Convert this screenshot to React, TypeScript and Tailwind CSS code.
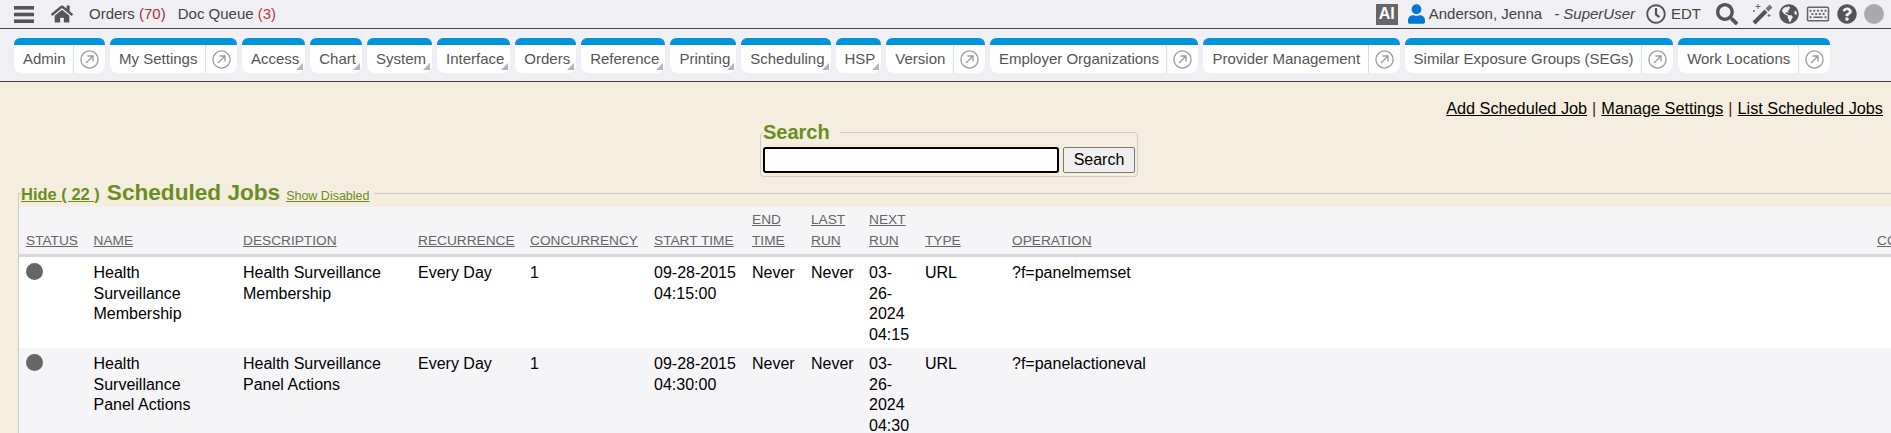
import { FaHome, FaUser, FaRegClock, FaSearch, FaGlobeAmericas, FaRegKeyboard, FaQuestionCircle } from 'react-icons/fa';

const tabs = [
  { label: 'Admin', type: 'link' },
  { label: 'My Settings', type: 'link' },
  { label: 'Access', type: 'menu' },
  { label: 'Chart', type: 'menu' },
  { label: 'System', type: 'menu' },
  { label: 'Interface', type: 'menu' },
  { label: 'Orders', type: 'menu' },
  { label: 'Reference', type: 'menu' },
  { label: 'Printing', type: 'menu' },
  { label: 'Scheduling', type: 'menu' },
  { label: 'HSP', type: 'menu' },
  { label: 'Version', type: 'link' },
  { label: 'Employer Organizations', type: 'link' },
  { label: 'Provider Management', type: 'link' },
  { label: 'Similar Exposure Groups (SEGs)', type: 'link' },
  { label: 'Work Locations', type: 'link' },
];

const columns = ['STATUS', 'NAME', 'DESCRIPTION', 'RECURRENCE', 'CONCURRENCY', 'START TIME', 'END TIME', 'LAST RUN', 'NEXT RUN', 'TYPE', 'OPERATION', 'COMMAND'];

const jobs = [
  {
    name: 'Health Surveillance Membership',
    description: 'Health Surveillance Membership',
    start: '09-28-2015 04:15:00',
    next: '03-26-2024 04:15',
    operation: '?f=panelmemset',
  },
  {
    name: 'Health Surveillance Panel Actions',
    description: 'Health Surveillance Panel Actions',
    start: '09-28-2015 04:30:00',
    next: '03-26-2024 04:30',
    operation: '?f=panelactioneval',
  },
];

const OpenIcon = () => (
  <svg width="19" height="19" viewBox="0 0 19 19" fill="none" stroke="#9a9a9a" strokeWidth="1.3">
    <circle cx="9.5" cy="9.5" r="8.6" />
    <path d="M6 13 L13 6 M7.5 6 H13 V11.5" />
  </svg>
);

const MenuIcon = () => (
  <svg width="20" height="17" viewBox="0 0 20 17" fill="#555">
    <rect y="0" width="20" height="3.6" />
    <rect y="6.7" width="20" height="3.6" />
    <rect y="13.4" width="20" height="3.6" />
  </svg>
);

const WandIcon = () => (
  <svg className="ml-[14px]" width="21" height="22" viewBox="0 0 21 22" fill="none">
    <path d="M2 20 L14 8" stroke="#555" strokeWidth="4" />
    <path d="M15 7 L19 3" stroke="#777" strokeWidth="4" />
    <path d="M6 1 V6 M3.5 3.5 H8.5 M1 8 H3 M2 7 V9 M17 11 V14 M15.5 12.5 H18.5" stroke="#666" strokeWidth="1" />
  </svg>
);

const Tab = ({ label, type }: { label: string; type: string }) => (
  <div className="relative flex flex-col h-[35px] rounded-t-[6px] rounded-b-[8px] overflow-hidden bg-white">
    <div className="h-[7px] bg-[#0095da]" />
    <div className="flex flex-1 items-stretch">
      {type === 'link' ? (
        <>
          <span className="pl-[9px] pr-[7.5px] leading-[27px] text-[#555]">{label}</span>
          <span className="flex w-[32px] items-center justify-center border-l border-[#ddd]">
            <OpenIcon />
          </span>
        </>
      ) : (
        <span className="pl-[9px] pr-[6px] leading-[27px] text-[#555]">{label}</span>
      )}
    </div>
    {type === 'menu' && (
      <svg className="absolute right-[2px] bottom-[3px]" width="7" height="7" viewBox="0 0 7 7">
        <path d="M7 0 V7 H0 Z" fill="#b5b5b5" />
      </svg>
    )}
  </div>
);

export default function App() {
  return (
    <div className="h-screen overflow-hidden bg-[#f5eddd] font-['Liberation_Sans',Arial,sans-serif] text-[15px] text-black">
      <div className="flex h-[29px] items-center border-b border-[#444] bg-[#efeff4] pl-[14px] pr-[7px] text-[#444]">
        <MenuIcon />
        <FaHome className="ml-[17px] h-[20px] w-[22px] text-[#555]" />
        <span className="ml-[16px]">Orders <span className="text-[#a33]">(70)</span></span>
        <span className="ml-[12px]">Doc Queue <span className="text-[#c33]">(3)</span></span>
        <div className="ml-auto flex items-center">
          <span className="flex h-[21px] w-[22px] items-center justify-center bg-[#666] text-[16px] font-bold text-white">AI</span>
          <FaUser className="ml-[10px] h-[20px] w-[17px] text-[#0078d4]" />
          <span className="ml-[4px]">Anderson, Jenna</span>
          <span className="ml-[12px] italic">- SuperUser</span>
          <FaRegClock className="ml-[11px] h-[20px] w-[20px] text-[#555]" />
          <span className="ml-[5px]">EDT</span>
          <FaSearch className="ml-[15px] h-[22px] w-[22px] text-[#555]" />
          <WandIcon />
          <FaGlobeAmericas className="ml-[6px] h-[20px] w-[20px] text-[#555]" />
          <FaRegKeyboard className="ml-[7px] h-[20px] w-[24px] text-[#666]" />
          <FaQuestionCircle className="ml-[7px] h-[20px] w-[20px] text-[#555]" />
          <span className="ml-[7px] h-[20px] w-[20px] rounded-full bg-[#aaa]" />
        </div>
      </div>

      <div className="flex h-[53px] gap-[5px] border-b border-[#444] bg-[#efeff4] pl-[14px] pt-[9px]">
        {tabs.map((tab) => (
          <Tab key={tab.label} label={tab.label} type={tab.type} />
        ))}
      </div>

      <div className="flex justify-end pr-[8px] pt-[16px] text-[16.25px] leading-[20px] text-[#522]">
        <a className="text-black underline">Add Scheduled Job</a>
        <span className="mx-[5px]">|</span>
        <a className="text-black underline">Manage Settings</a>
        <span className="mx-[5px]">|</span>
        <a className="text-black underline">List Scheduled Jobs</a>
      </div>

      <div className="flex justify-center pl-[7px] pt-[3px]">
        <fieldset className="w-[378px] rounded-[4px] border border-[#ccc] px-[2px] pb-[3px] pt-[4px]">
          <legend className="pr-[10px] text-[20px] font-bold leading-[22px] text-[#6b8e23]">Search</legend>
          <div className="flex gap-[4px]">
            <input className="h-[26px] w-[296px] rounded-[3px] border-2 border-black bg-white" />
            <button className="h-[26px] w-[72px] rounded-[2px] border border-[#777] bg-[#efefef] text-[16px]">Search</button>
          </div>
        </fieldset>
      </div>

      <fieldset className="ml-[18px] mt-[2px] w-[1900px] border-l border-t border-[#ccc]">
        <legend className="-mb-px ml-[2px] flex items-baseline pr-[4px] pt-[2px] leading-[24px] text-[#6b8e23]">
          <a className="text-[16.5px] font-bold underline">Hide ( 22 )</a>
          <span className="ml-[7px] text-[22.6px] font-bold">Scheduled Jobs</span>
          <a className="ml-[6px] text-[12.5px] underline">Show Disabled</a>
        </legend>
        <table className="w-[2000px] table-fixed border-collapse text-[16px] leading-[20.5px]">
          <colgroup>
            <col className="w-[67.5px]" />
            <col className="w-[149.5px]" />
            <col className="w-[175px]" />
            <col className="w-[112px]" />
            <col className="w-[124px]" />
            <col className="w-[98px]" />
            <col className="w-[59px]" />
            <col className="w-[58px]" />
            <col className="w-[56px]" />
            <col className="w-[87px]" />
            <col className="w-[865px]" />
            <col />
          </colgroup>
          <thead>
            <tr className="border-b-[3px] border-[#d8d8d8] bg-[#f5f5f8]">
              {columns.map((col) => (
                <th key={col} className="px-[7px] pb-[3px] pt-[3px] text-left align-bottom text-[13.7px] font-normal text-[#666]">
                  <a className="underline">{col}</a>
                </th>
              ))}
            </tr>
          </thead>
          <tbody>
            {jobs.map((job, i) => (
              <tr key={job.name} className={i % 2 === 0 ? 'bg-white' : 'bg-[#f5f5f8]'}>
                <td className="px-[7px] pb-[3px] pt-[6px] align-top">
                  <div className="h-[17px] w-[17px] rounded-full bg-[#666]" />
                </td>
                <td className="pb-[3px] pl-[7px] pr-[14px] pt-[6px] align-top">{job.name}</td>
                <td className="px-[7px] pb-[3px] pt-[6px] align-top">{job.description}</td>
                <td className="px-[7px] pb-[3px] pt-[6px] align-top">Every Day</td>
                <td className="px-[7px] pb-[3px] pt-[6px] align-top">1</td>
                <td className="px-[7px] pb-[3px] pt-[6px] align-top">{job.start}</td>
                <td className="px-[7px] pb-[3px] pt-[6px] align-top">Never</td>
                <td className="px-[7px] pb-[3px] pt-[6px] align-top">Never</td>
                <td className="px-[7px] pb-[3px] pt-[6px] align-top">{job.next}</td>
                <td className="px-[7px] pb-[3px] pt-[6px] align-top">URL</td>
                <td className="px-[7px] pb-[3px] pt-[6px] align-top">{job.operation}</td>
                <td className="px-[7px] pb-[3px] pt-[6px] align-top" />
              </tr>
            ))}
          </tbody>
        </table>
      </fieldset>
    </div>
  );
}
